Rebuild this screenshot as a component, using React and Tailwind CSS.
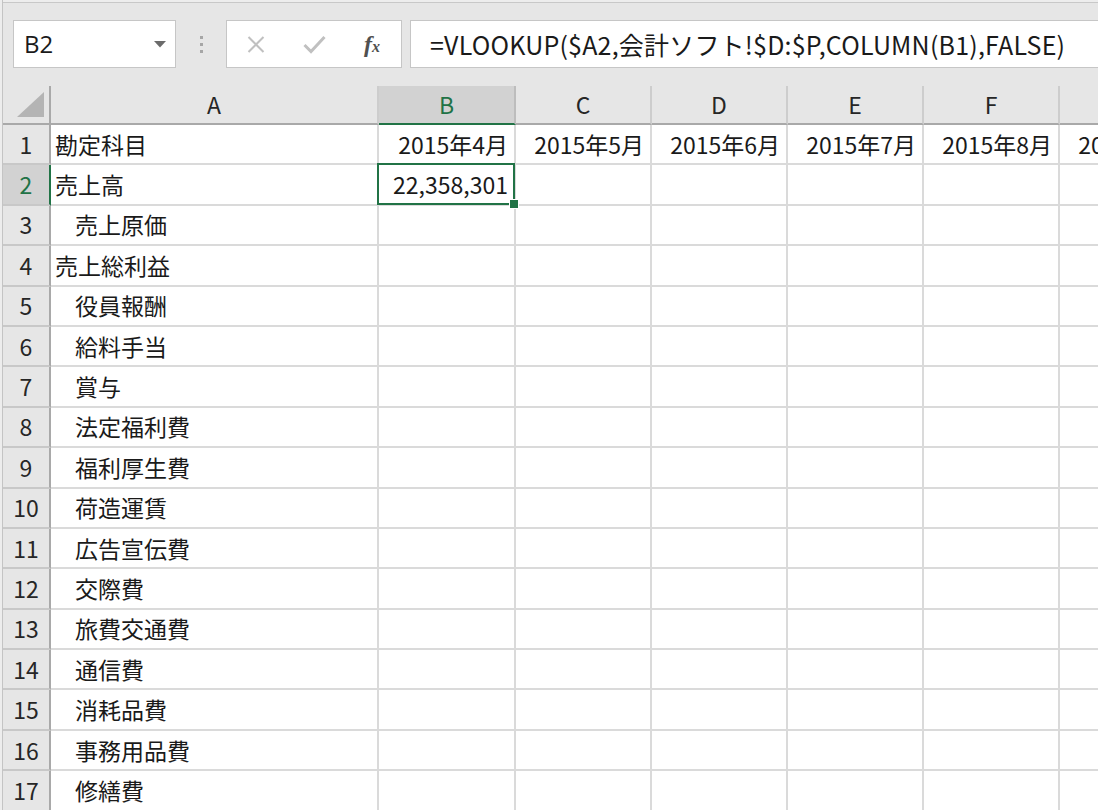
import React from "react";

const rows = [
  ["勘定科目", false],
  ["売上高", false],
  ["売上原価", true],
  ["売上総利益", false],
  ["役員報酬", true],
  ["給料手当", true],
  ["賞与", true],
  ["法定福利費", true],
  ["福利厚生費", true],
  ["荷造運賃", true],
  ["広告宣伝費", true],
  ["交際費", true],
  ["旅費交通費", true],
  ["通信費", true],
  ["消耗品費", true],
  ["事務用品費", true],
  ["修繕費", true],
];

const cols = [
  { l: "B", w: "w-[137px]", m: "2015年4月" },
  { l: "C", w: "w-[136px]", m: "2015年5月" },
  { l: "D", w: "w-[136px]", m: "2015年6月" },
  { l: "E", w: "w-[136px]", m: "2015年7月" },
  { l: "F", w: "w-[136px]", m: "2015年8月" },
  { l: "G", w: "w-[136px]", m: "2015年9月" },
];

function Toolbar() {
  return (
    <div className="h-[83px] pt-[17px] flex items-start shrink-0">
      <div className="ml-[10px] w-[163px] h-[48px] bg-white border border-[#c6c6c6] flex items-center justify-between pl-[10px] pr-[9px]">
        <span className="font-['Open_Sans',sans-serif] text-[24px] leading-none text-[#1a1a1a]">B2</span>
        <svg width="12" height="7" viewBox="0 0 12 7">
          <polygon points="0,0 12,0 6,6.5" fill="#6b6b6b" />
        </svg>
      </div>
      <div className="w-[50px] h-[48px] flex flex-col items-center justify-center gap-[4px]">
        <div className="w-[3px] h-[3px] bg-[#a6a6a6]" />
        <div className="w-[3px] h-[3px] bg-[#a6a6a6]" />
        <div className="w-[3px] h-[3px] bg-[#a6a6a6]" />
      </div>
      <div className="w-[176px] h-[48px] bg-white border border-[#c6c6c6] flex items-center">
        <div className="w-[58px] flex justify-center">
          <svg width="18" height="17" viewBox="0 0 18 17">
            <path d="M1.5 1 L16.5 16 M16.5 1 L1.5 16" stroke="#c0c0c0" strokeWidth="2" fill="none" />
          </svg>
        </div>
        <div className="w-[58px] flex justify-center">
          <svg width="23" height="19" viewBox="0 0 23 19">
            <path d="M1.5 10 L8 16.5 L21.5 2" stroke="#c0c0c0" strokeWidth="3" fill="none" />
          </svg>
        </div>
        <div className="w-[58px] flex justify-center">
          <span className="font-['Liberation_Serif',serif] italic font-bold text-[#505050] text-[24px] leading-none">
            f<span className="text-[16px]">x</span>
          </span>
        </div>
      </div>
      <div className="ml-[8px] flex-1 h-[48px] bg-white border border-r-0 border-[#c6c6c6] flex items-center pl-[19px]">
        <span className="font-['Noto_Sans_CJK_JP',sans-serif] text-[25px] tracking-[0.2px] leading-none text-[#1a1a1a] whitespace-nowrap">
          =VLOOKUP($A2,会計ソフト!$D:$P,COLUMN(B1),FALSE)
        </span>
      </div>
    </div>
  );
}

function HeaderRow() {
  return (
    <div className="flex h-[39px] shrink-0 font-['Noto_Sans_CJK_JP',sans-serif] text-[23px] leading-none">
      <div className="w-[48px] shrink-0 relative border-r-2 border-b-2 border-r-[#a9a9a9] border-b-[#a9a9a9] bg-[#e6e6e6]">
        <svg className="absolute left-0 top-0" width="46" height="37" viewBox="0 0 46 37">
          <polygon points="14,31 41,6 41,31" fill="#b4b4b4" />
        </svg>
      </div>
      <div className="w-[328px] shrink-0 flex items-center justify-center border-r-2 border-b-2 border-r-[#cdcdcd] border-b-[#a9a9a9] bg-[#e6e6e6] text-[#262626]">
        A
      </div>
      {cols.map((c) =>
        c.l === "B" ? (
          <div
            key={c.l}
            className={`${c.w} shrink-0 flex items-center justify-center border-r-2 border-b-2 border-r-[#bdbdbd] border-b-[#217346] bg-[#d2d2d2] text-[#217346]`}
          >
            {c.l}
          </div>
        ) : (
          <div
            key={c.l}
            className={`${c.w} shrink-0 flex items-center justify-center border-r-2 border-b-2 border-r-[#cdcdcd] border-b-[#a9a9a9] bg-[#e6e6e6] text-[#262626]`}
          >
            {c.l}
          </div>
        )
      )}
    </div>
  );
}

function DataRow({ idx, label, indent }) {
  const n = idx + 1;
  const selected = n === 2;
  return (
    <div className="flex h-[40.4px] shrink-0 font-['Noto_Sans_CJK_JP',sans-serif] text-[23px] leading-none text-[#1a1a1a]">
      <div
        className={
          selected
            ? "w-[48px] shrink-0 flex items-center justify-center border-r-2 border-b-2 border-r-[#217346] border-b-[#c8c8c8] bg-[#d2d2d2] text-[#217346]"
            : "w-[48px] shrink-0 flex items-center justify-center border-r-2 border-b-2 border-r-[#a9a9a9] border-b-[#c8c8c8] bg-[#e6e6e6] text-[#262626]"
        }
      >
        {n}
      </div>
      <div
        className={
          indent
            ? "w-[328px] shrink-0 flex items-center pl-[24px] border-r-2 border-b-2 border-[#dadada] bg-white whitespace-nowrap"
            : "w-[328px] shrink-0 flex items-center pl-[4px] border-r-2 border-b-2 border-[#dadada] bg-white whitespace-nowrap"
        }
      >
        {label}
      </div>
      {cols.map((c) => (
        <div
          key={c.l}
          className={`${c.w} shrink-0 relative flex items-center justify-end pr-[6px] border-r-2 border-b-2 border-[#dadada] bg-white whitespace-nowrap`}
        >
          {n === 1 ? c.m : null}
          {n === 2 && c.l === "B" ? (
            <>
              22,358,301
              <div className="absolute z-10 left-[-2px] top-[-2px] right-[-1px] bottom-[-1px] border-2 border-[#217346]" />
              <div className="absolute z-20 right-[-5px] bottom-[-5px] w-[10px] h-[10px] bg-[#217346] border border-white" />
            </>
          ) : null}
        </div>
      ))}
    </div>
  );
}

export default function App() {
  return (
    <div className="w-[1098px] h-[810px] overflow-hidden bg-[#e6e6e6] flex">
      <div className="w-[3px] shrink-0 bg-[#ededed] border-r border-[#c4c4c4]" />
      <div className="flex-1 min-w-0 flex flex-col overflow-hidden">
        <div className="h-[3px] shrink-0 bg-[#ededed] border-b border-[#c8c8c8]" />
        <Toolbar />
        <HeaderRow />
        {rows.map(([label, indent], i) => (
          <DataRow key={i} idx={i} label={label} indent={indent} />
        ))}
      </div>
    </div>
  );
}
